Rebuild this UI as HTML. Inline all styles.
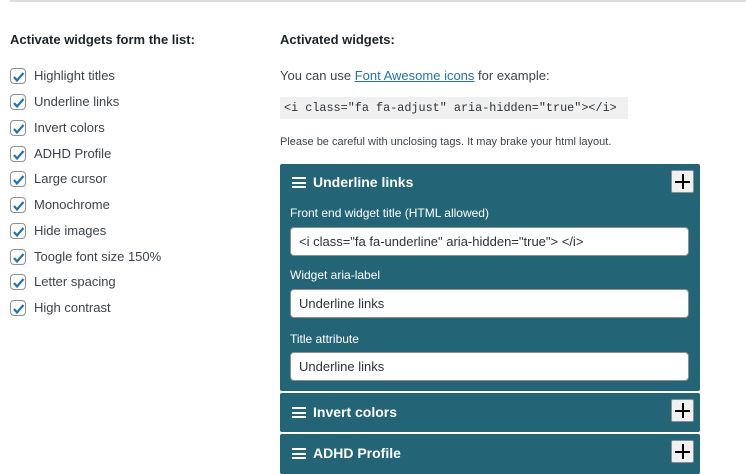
<!DOCTYPE html>
<html><head><style>
*{box-sizing:border-box;margin:0;padding:0}
body{width:746px;height:467px;overflow:hidden;background:#fff;font-family:"Liberation Sans",sans-serif;font-size:13px;color:#3c434a;position:relative}
.top{position:absolute;left:10px;top:0;width:736px;height:2px;background:#dcdcde}
.h{position:absolute;font-weight:bold;font-size:13px;color:#1d2327}
.cb{position:absolute;left:10px;width:16px;height:16px;border:1px solid #8c8f94;border-radius:4px;background:#fff}
.cb svg{position:absolute;left:0;top:0}
.lbl{position:absolute;left:34px}
.p{position:absolute;left:280px;width:420px;background:#246477;border-radius:2px}
.ph{position:absolute;left:12px;color:#fff;font-weight:bold;font-size:14px}
.ham{display:inline-block;width:14px;height:11px;vertical-align:-1px;margin-right:7px;border-top:2px solid #fff;border-bottom:2px solid #fff;position:relative}
.ham:after{content:"";position:absolute;left:0;right:0;top:2.5px;height:2px;background:#fff}
.plus{position:absolute;right:6px;width:23px;height:23px;background:#f0f0f1;border:1px solid #8c8f94;border-radius:2px}
.plus:before{content:"";position:absolute;left:3px;right:3px;top:9.5px;height:2px;background:#000}
.plus:after{content:"";position:absolute;top:3px;bottom:3px;left:9.5px;width:2px;background:#000}
.fl{position:absolute;left:10px;color:#fff;font-size:12px}
.in{position:absolute;left:10px;width:399px;height:29px;background:#fff;border:1px solid #8c8f94;border-radius:4px;padding:0 8px;line-height:27px;color:#2c3338;font-size:13px;white-space:nowrap}
</style></head><body>
<div class="top"></div>
<div class="h" style="left:10px;top:32px">Activate widgets form the list:</div>
<div class="h" style="left:280px;top:32px">Activated widgets:</div>

<div class="cb" style="top:68px"><svg width="16" height="16"><path d="M3 8l3 3.5 6.5-7.5" stroke="#2271b1" stroke-width="2.2" fill="none"/></svg></div><div class="lbl" style="top:68px">Highlight titles</div>
<div class="cb" style="top:94px"><svg width="16" height="16"><path d="M3 8l3 3.5 6.5-7.5" stroke="#2271b1" stroke-width="2.2" fill="none"/></svg></div><div class="lbl" style="top:94px">Underline links</div>
<div class="cb" style="top:120px"><svg width="16" height="16"><path d="M3 8l3 3.5 6.5-7.5" stroke="#2271b1" stroke-width="2.2" fill="none"/></svg></div><div class="lbl" style="top:120px">Invert colors</div>
<div class="cb" style="top:146px"><svg width="16" height="16"><path d="M3 8l3 3.5 6.5-7.5" stroke="#2271b1" stroke-width="2.2" fill="none"/></svg></div><div class="lbl" style="top:146px">ADHD Profile</div>
<div class="cb" style="top:171px"><svg width="16" height="16"><path d="M3 8l3 3.5 6.5-7.5" stroke="#2271b1" stroke-width="2.2" fill="none"/></svg></div><div class="lbl" style="top:171px">Large cursor</div>
<div class="cb" style="top:197px"><svg width="16" height="16"><path d="M3 8l3 3.5 6.5-7.5" stroke="#2271b1" stroke-width="2.2" fill="none"/></svg></div><div class="lbl" style="top:197px">Monochrome</div>
<div class="cb" style="top:223px"><svg width="16" height="16"><path d="M3 8l3 3.5 6.5-7.5" stroke="#2271b1" stroke-width="2.2" fill="none"/></svg></div><div class="lbl" style="top:223px">Hide images</div>
<div class="cb" style="top:249px"><svg width="16" height="16"><path d="M3 8l3 3.5 6.5-7.5" stroke="#2271b1" stroke-width="2.2" fill="none"/></svg></div><div class="lbl" style="top:249px">Toogle font size 150%</div>
<div class="cb" style="top:274px"><svg width="16" height="16"><path d="M3 8l3 3.5 6.5-7.5" stroke="#2271b1" stroke-width="2.2" fill="none"/></svg></div><div class="lbl" style="top:274px">Letter spacing</div>
<div class="cb" style="top:300px"><svg width="16" height="16"><path d="M3 8l3 3.5 6.5-7.5" stroke="#2271b1" stroke-width="2.2" fill="none"/></svg></div><div class="lbl" style="top:300px">High contrast</div>

<div style="position:absolute;left:280px;top:68px">You can use <span style="color:#2271b1;text-decoration:underline">Font Awesome icons</span> for example:</div>
<div style="position:absolute;left:280px;top:97px;height:22px;width:348px;background:#f0f0f1;font-family:'Liberation Mono',monospace;font-size:11.8px;line-height:22px;padding-left:4px;color:#2c3338;white-space:nowrap;overflow:hidden">&lt;i class="fa fa-adjust" aria-hidden="true"&gt;&lt;/i&gt;</div>
<div style="position:absolute;left:280px;top:136px;font-size:11px">Please be careful with unclosing tags. It may brake your html layout.</div>

<div class="p" style="top:164px;height:227px">
 <div class="ph" style="top:10px"><span class="ham"></span>Underline links</div>
 <div class="plus" style="top:6px"></div>
 <div class="fl" style="top:42px">Front end widget title (HTML allowed)</div>
 <div class="in" style="top:63px">&lt;i class="fa fa-underline" aria-hidden="true"&gt; &lt;/i&gt;</div>
 <div class="fl" style="top:104px">Widget aria-label</div>
 <div class="in" style="top:125px">Underline links</div>
 <div class="fl" style="top:168px">Title attribute</div>
 <div class="in" style="top:188px">Underline links</div>
</div>
<div class="p" style="top:393px;height:39px">
 <div class="ph" style="top:11px"><span class="ham"></span>Invert colors</div>
 <div class="plus" style="top:6px"></div>
</div>
<div class="p" style="top:434px;height:40px">
 <div class="ph" style="top:11px"><span class="ham"></span>ADHD Profile</div>
 <div class="plus" style="top:6px"></div>
</div>
</body></html>
